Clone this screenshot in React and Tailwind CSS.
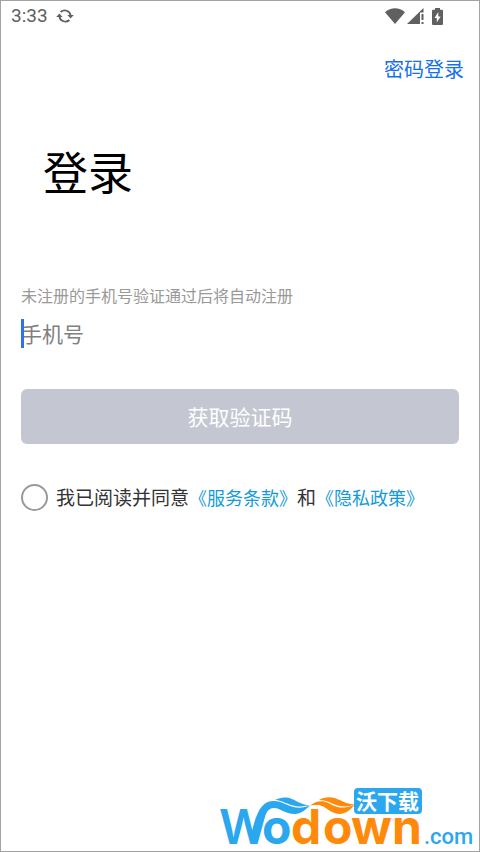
const StatusBar = () => {
  return (
    <div className="flex h-[30px] items-center justify-between pl-[10px] pr-9 text-[#606060]">
      <div className="flex items-center gap-2">
        <span className="font-['Roboto',sans-serif] text-[19px] leading-6">3:33</span>
        <svg className="h-4 w-[18px]" viewBox="0 0 18 16" fill="none" stroke="currentColor" strokeWidth="1.8">
          <path d="M4.6 4A6 6 0 0 1 14.6 7.5" />
          <path d="M13.4 12A6 6 0 0 1 3.4 8.5" />
          <path d="M11.4 7h6.4l-3.2 3.6z" fill="currentColor" stroke="none" />
          <path d="M0.2 9h6.4l-3.2-3.6z" fill="currentColor" stroke="none" />
        </svg>
      </div>
      <div className="flex items-center">
        <svg className="h-4 w-5" viewBox="0 0 20 16" fill="currentColor">
          <path d="M0 4.2C5.5-1 14.5-1 20 4.2L10 16z" />
        </svg>
        <svg className="ml-[2px] h-4 w-[17px]" viewBox="0 0 17 16" fill="currentColor">
          <path d="M0 16L16.5 0v4.5H13V16z" />
          <path d="M14.5 6h2v6h-2zM14.5 14h2v2h-2z" />
        </svg>
        <svg className="ml-2 h-[17px] w-[11px]" viewBox="0 0 11 17" fill="currentColor">
          <path
            fillRule="evenodd"
            d="M3 0h5v1.7H10a1 1 0 0 1 1 1V16a1 1 0 0 1-1 1H1a1 1 0 0 1-1-1V2.7a1 1 0 0 1 1-1h2zM6.3 4L2.5 10h2.3v4.5L8.6 8.5H6.3z"
          />
        </svg>
      </div>
    </div>
  );
};

const Logo = () => {
  return (
    <svg className="h-[66px] w-[256px] overflow-visible" viewBox="218 786 256 66" role="img" aria-label="Wodown.com">
      <g fontFamily="Inter, sans-serif" fontSize="48" fontWeight="700">
        <text y="845" fill="#2aa7ee">
          <tspan x="219" fontWeight="600">W</tspan>
          <tspan x="262">o</tspan>
        </text>
        <text y="845" fill="#ff8a0a">
          <tspan x="291">d</tspan>
          <tspan x="323">o</tspan>
          <tspan x="351">w</tspan>
          <tspan x="392">n</tspan>
        </text>
      </g>
      <g fill="#2aa7ee">
        <path d="M250 840L253 828C258 810 263 802 274 802C283 802 286 807 296 808.500C301 809 306 808 310 806.500C305 811 301 815 295 815C284 815 281 809 274 809C268 809 266 814 264 820L257 844z" />
        <path d="M275 801C280 798.500 286 797.500 292 800C299 803 303 806.500 310 806C305 807.500 300 808 295 807C287 805.500 283 801.500 275 801z" />
      </g>
      <g fill="#ff8a0a">
        <path d="M310 806.500C315 803 319 801.500 324 802.500C331 804 333 808 341 808.500C345 808.500 350 808 355 805.500C350 811 346 815 339 815C329 814 326 807 319 806C316 806 313 806 310 806.500z" />
        <path d="M319 801C324 798 330 797.500 336 799.500C343 802 348 806 355 805C350 807.500 345 808 340 807C331 805 328 801 319 801z" />
      </g>
      <rect x="354" y="789" width="68" height="26" rx="4" fill="#2aa7ee" />
      <text x="356" y="810" fontFamily="'Noto Sans CJK SC', sans-serif" fontSize="21" fontWeight="700" fill="#fff">
        沃下载
      </text>
      <text x="424" y="845" fontFamily="Roboto, sans-serif" fontSize="22" fontWeight="500" fill="#2aa7ee">
        .com
      </text>
    </svg>
  );
};

const LoginForm = () => {
  return (
    <form className="mt-20 px-5" onSubmit={(e) => e.preventDefault()}>
      <p className="text-base leading-6 text-[#999999]">未注册的手机号验证通过后将自动注册</p>
      <div className="relative mt-3">
        <span className="absolute left-0 top-0 h-[29px] w-[3px] bg-[#2f72e8]" />
        <input
          type="tel"
          aria-label="手机号"
          placeholder="手机号"
          className="block h-7 w-full bg-transparent text-[21px] leading-7 outline-none placeholder:text-[#808080]"
        />
      </div>
      <button type="submit" className="mt-[42px] h-[55px] w-full rounded-md bg-[#c4c7d1] text-[21px] text-white">
        获取验证码
      </button>
      <div className="mt-[39px] flex items-center gap-2 text-[19px] leading-7 text-[#333333]">
        <input
          id="agree"
          type="checkbox"
          className="size-[27px] shrink-0 appearance-none rounded-full border-2 border-[#999999] checked:bg-[#2f72e8]"
        />
        <div className="whitespace-nowrap">
          <label htmlFor="agree">我已阅读并同意</label>
          <a href="#terms" className="text-lg leading-7 text-[#149bd7]">《服务条款》</a>
          和
          <a href="#privacy" className="text-lg leading-7 text-[#149bd7]">《隐私政策》</a>
        </div>
      </div>
    </form>
  );
};

const App = () => {
  return (
    <div className="flex min-h-screen flex-col border border-[#a3a3a3] bg-white font-['Noto_Sans_CJK_SC',sans-serif]">
      <StatusBar />
      <div className="mt-[22px] flex justify-end pr-[15px]">
        <a href="#password" className="text-xl leading-8 text-[#1670ee]">密码登录</a>
      </div>
      <h1 className="ml-[42px] mt-[54px] text-[45px] leading-[64px] text-black">登录</h1>
      <LoginForm />
      <div className="mt-auto flex justify-end pr-[5px]">
        <Logo />
      </div>
    </div>
  );
};

export default App;
